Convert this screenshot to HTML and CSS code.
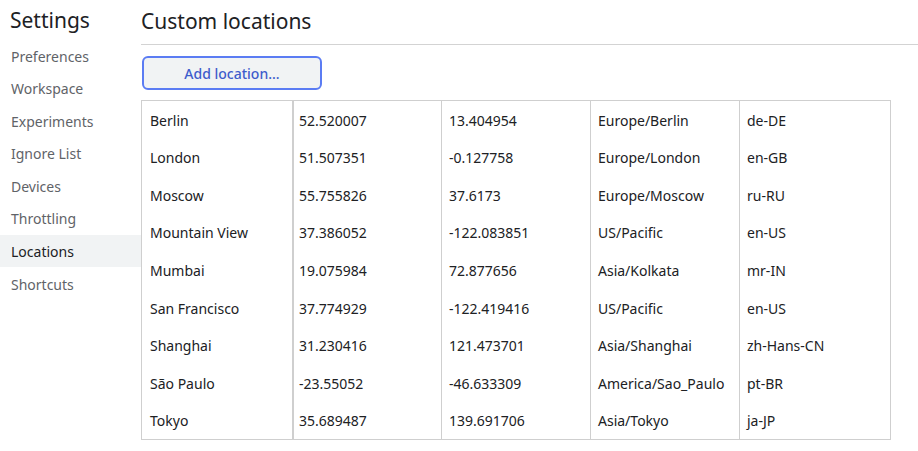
FILE: index.html
```html
<!DOCTYPE html>
<html>
<head>
<meta charset="utf-8">
<link rel="stylesheet" href="styles.css">
</head>
<body>
<div class="app">
  <nav class="sidebar">
    <div class="title">Settings</div>
    <div class="item">Preferences</div>
    <div class="item">Workspace</div>
    <div class="item">Experiments</div>
    <div class="item">Ignore List</div>
    <div class="item">Devices</div>
    <div class="item">Throttling</div>
    <div class="item selected">Locations</div>
    <div class="item">Shortcuts</div>
  </nav>
  <main class="main">
    <div class="header">Custom locations</div>
    <button class="add">Add location...</button>
    <div class="table">
      <div class="c c1">Berlin</div><div class="c c2">52.520007</div><div class="c">13.404954</div><div class="c">Europe/Berlin</div><div class="c">de-DE</div>
      <div class="c c1">London</div><div class="c c2">51.507351</div><div class="c">-0.127758</div><div class="c">Europe/London</div><div class="c">en-GB</div>
      <div class="c c1">Moscow</div><div class="c c2">55.755826</div><div class="c">37.6173</div><div class="c">Europe/Moscow</div><div class="c">ru-RU</div>
      <div class="c c1">Mountain View</div><div class="c c2">37.386052</div><div class="c">-122.083851</div><div class="c">US/Pacific</div><div class="c">en-US</div>
      <div class="c c1">Mumbai</div><div class="c c2">19.075984</div><div class="c">72.877656</div><div class="c">Asia/Kolkata</div><div class="c">mr-IN</div>
      <div class="c c1">San Francisco</div><div class="c c2">37.774929</div><div class="c">-122.419416</div><div class="c">US/Pacific</div><div class="c">en-US</div>
      <div class="c c1">Shanghai</div><div class="c c2">31.230416</div><div class="c">121.473701</div><div class="c">Asia/Shanghai</div><div class="c">zh-Hans-CN</div>
      <div class="c c1">São Paulo</div><div class="c c2">-23.55052</div><div class="c">-46.633309</div><div class="c">America/Sao_Paulo</div><div class="c">pt-BR</div>
      <div class="c c1">Tokyo</div><div class="c c2">35.689487</div><div class="c">139.691706</div><div class="c">Asia/Tokyo</div><div class="c">ja-JP</div>
    </div>
  </main>
</div>
</body>
</html>
```
FILE: styles.css
```css
* { box-sizing: border-box; }
html, body { margin: 0; padding: 0; background: #fff; }
body {
  font-family: "Noto Sans", "Open Sans", sans-serif;
  font-size: 14px;
  color: #202124;
  width: 918px;
  height: 451px;
  overflow: hidden;
}
.app { display: flex; height: 451px; }
.sidebar { width: 141px; flex: none; }
.title {
  height: 39px;
  line-height: 40px;
  padding-left: 10px;
  font-size: 21px;
  color: #202124;
}
.item {
  height: 32.6px;
  line-height: 32.6px;
  padding: 1.5px 0 0 11px;
  color: #5f6368;
}
.item.selected { background: #f1f3f4; color: #202124; }
.main { flex: 1; display: flex; flex-direction: column; align-items: flex-start; }
.header {
  align-self: stretch;
  height: 45px;
  line-height: 43px;
  padding-left: 0;
  font-size: 21px;
  border-bottom: 1px solid #d3d3d3;
}
.add {
  margin: 11px 0 0 1px;
  width: 180px;
  height: 34px;
  border: 2px solid #5b7cf3;
  border-radius: 6px;
  background: #f1f3f4;
  color: #3e5ccc;
  font-family: inherit;
  font-size: 14px;
  font-weight: 500;
  padding: 0;
}
.table {
  margin-top: 10px;
  width: 750px;
  display: grid;
  grid-template-columns: 150px 149px 149px 149px 151px;
  grid-template-rows: repeat(9, 37.55px);
  border: 1px solid #cfcfcf;
}
.c {
  display: flex;
  align-items: center;
  padding: 1px 0 0 7px;
  border-left: 1px solid #cfcfcf;
  white-space: nowrap;
}
.c1 { border-left: none; padding-left: 8px; }
.c2 { border-left: 2px solid #cfcfcf; padding-left: 5px; }
```
